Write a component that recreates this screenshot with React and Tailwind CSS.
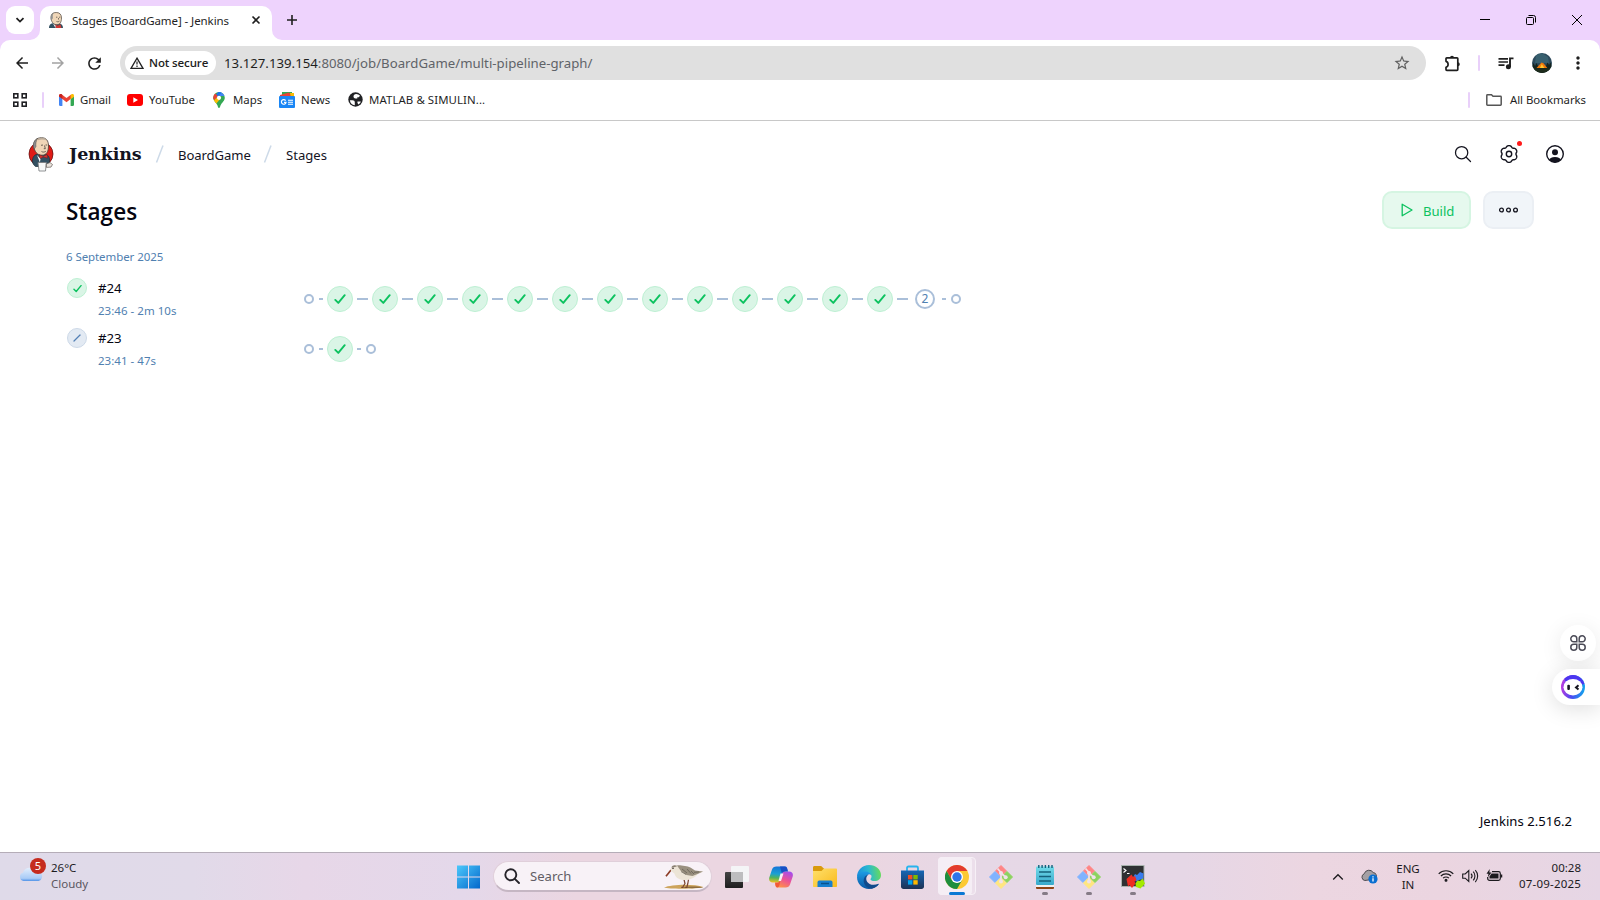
import React from "react";
import {
  MdArrowBack, MdArrowForward, MdRefresh, MdStarBorder, MdMoreVert,
} from "react-icons/md";
import { IoSearchOutline } from "react-icons/io5";

/* ---------- browser icons ---------- */

function JenkinsHead() {
  return (
    <svg width="16" height="16" viewBox="0 0 16 16">
      <path d="M1 16C1 12.6 3 11.2 6 11l5 .3c2.4.4 3.9 1.800 4 4.700z" fill="#335061" />
      <path d="M3 5C3 1.700 5.200.5 8.200.5c3.400 0 5.300 2 5.300 5.500 0 4-1.500 6.700-4.600 6.700C5.500 12.700 3 10 3 5z" fill="#f0d6b7" stroke="#49413a" strokeWidth=".7" />
      <path d="M3 8.500c-.8-3 0-6.400 2.500-7.500-1 2-.8 3.700-.6 5.200z" fill="#8f9090" />
      <path d="M8 5.200h1.400M11 5.200h1.300M8.500 9.500c1.200.5 2.200.2 3-.4M10.500 6v1.600" stroke="#49413a" strokeWidth=".7" fill="none" />
      <path d="M7.200 12.500l2.600 1.200L12.400 12.300l1 3.700H7.600z" fill="#d33833" />
      <path d="M5 11.500l2.500 2v2.500z" fill="#fff" />
    </svg>
  );
}

function JenkinsLogo() {
  return (
    <svg width="26" height="35" viewBox="0 0 26 35">
      <circle cx="13" cy="17" r="12" fill="#e01b16" stroke="#611" strokeWidth=".8" />
      <path d="M4.500 23C5 19 7 17.500 10 17l8 .6c2.600.8 3.700 3 3.700 6.400l-2 5.500H7.500C5.500 28 4.200 26 4.500 23z" fill="#335061" stroke="#1d2f3a" strokeWidth=".7" />
      <path d="M5.800 9C5.300 3.500 8.700.7 13.500.7c4.800 0 7 3 7 8.300 0 5.500-2 9.200-6.500 9.200C9.200 18.200 6.300 14.500 5.800 9z" fill="#f0d6b7" stroke="#49413a" strokeWidth=".8" />
      <path d="M6 12.500C4.500 8 5.500 3.300 9.600 1.500 8 4 7.700 6.500 8 9.500z" fill="#8b8d8f" stroke="#49413a" strokeWidth=".4" />
      <path d="M10 1.700C13 .2 17.500.5 19 3.500 16.500 2.500 13 2 10 3.200z" fill="#b9ab9a" />
      <path d="M13 8.300l2-.3M17.500 8h1.700M16.500 8.500l.8 3.200h-1.500M13.500 14.500c1.500.9 3 .7 4.300-.2" stroke="#49413a" strokeWidth=".8" fill="none" />
      <path d="M11.500 17.800l3.600 1.600 4-1.900.4 3.600-4-1.100-3.600 1.600z" fill="#d33833" stroke="#81100e" strokeWidth=".5" />
      <path d="M9 18l3.500 4-.6 3.500z" fill="#fff" />
      <path d="M10 25.500h8.300l-.8 8.500h-6.500z" fill="#f7f8f8" stroke="#77797b" strokeWidth=".8" />
      <path d="M18.300 27l3.700-1.500 2.500 2-1.500 2.600-4.600.3z" fill="#e8e2dc" stroke="#665f59" strokeWidth=".7" />
    </svg>
  );
}

function WarningIcon() {
  return (
    <svg width="14" height="12" viewBox="0 0 14 12" fill="none">
      <path d="M7 1.200 13 11.300H1z" stroke="#222" strokeWidth="1.300" />
      <path d="M7 4.600v3M7 8.500v1.400" stroke="#222" strokeWidth="1.200" />
    </svg>
  );
}

function ExtensionIcon() {
  return (
    <svg width="17" height="17" viewBox="0 0 17 17">
      <path d="M2 3.600a.8.800 0 0 1 .8-.8H13a.8.800 0 0 1 .8.800v11a.8.800 0 0 1-.8.800H2.800a.8.800 0 0 1-.8-.8v-2.300c1.300-.3 2.100-1.400 2.100-2.700S3.300 6.600 2 6.300z" fill="none" stroke="#1f1f1f" strokeWidth="1.700" strokeLinejoin="round" />
      <path d="M6 2.800a2 2 0 0 1 4 0zM13.800 7.200a2 2 0 0 1 0 4z" fill="#1f1f1f" />
    </svg>
  );
}

function QueueIcon() {
  return (
    <svg width="16" height="13" viewBox="0 0 16 13" fill="none" stroke="#1f1f1f" strokeWidth="1.700">
      <path d="M.5 1.800h9.500M.5 5h9.500M.5 8.200h6" />
      <path d="M12 10V1.400h3.500" strokeWidth="1.900" />
      <circle cx="10.400" cy="9.800" r="2.500" fill="#1f1f1f" stroke="none" />
    </svg>
  );
}

function AppsGrid() {
  return (
    <svg width="14" height="14" viewBox="0 0 14 14" fill="none" stroke="#202124" strokeWidth="1.600">
      <rect x=".8" y=".8" width="4" height="4" />
      <rect x="9.200" y=".8" width="4" height="4" />
      <rect x=".8" y="9.200" width="4" height="4" />
      <rect x="9.200" y="9.200" width="4" height="4" />
    </svg>
  );
}

function GmailIcon() {
  return (
    <svg width="15" height="12" viewBox="0 0 15 12">
      <path d="M0 2v8.800c0 .6.400 1.200 1 1.200h2.400V4.500z" fill="#4285f4" />
      <path d="M15 2v8.800c0 .6-.4 1.200-1 1.200h-2.400V4.500z" fill="#34a853" />
      <path d="M0 1.800C0 .2 1.500-.5 2.800.4l4.700 3.700L12.200.4v4.100L7.500 8.200 2.800 4.500 0 2.600z" fill="#ea4335" />
      <path d="M11.600 1 12.600.2C13.800-.5 15 .3 15 1.800v1l-3.400 2.500z" fill="#fbbc04" />
      <path d="M0 1.600C.2.300 1.600-.3 2.700.3l.7.600v4L0 2.600z" fill="#c5221f" />
    </svg>
  );
}

function MapsPin() {
  return (
    <svg width="12" height="16" viewBox="0 0 12 16">
      <defs><clipPath id="pin"><path d="M6 0a5.800 5.800 0 0 1 5.800 5.800c0 3.200-2.800 4.600-4.200 7.500C7.100 14.500 7 16 6 16s-1.100-1.500-1.600-2.700C3 10.400.2 9 .2 5.800A5.800 5.800 0 0 1 6 0z" /></clipPath></defs>
      <g clipPath="url(#pin)">
        <rect width="12" height="16" fill="#34a853" />
        <path d="M4-1h8v5L7 4z" fill="#4285f4" />
        <path d="M3.500 5 0 9.500l2.500 3L8 6z" fill="#fbbc04" />
        <path d="M6-1 2 4l2 2 5-6z" fill="#1a73e8" />
        <path d="M0 2.500 1.800 1l3 3L1.500 8-1 6z" fill="#ea4335" />
      </g>
      <circle cx="6" cy="5.800" r="2.100" fill="#fff" />
    </svg>
  );
}

function NewsIcon() {
  return (
    <svg width="16" height="16" viewBox="0 0 16 16">
      <path d="M3 0h10v5H3z" fill="#34a853" />
      <path d="M1 3l9-2.500 3 3.500v2H1z" fill="#ea4335" />
      <path d="M11 1h4v5h-3z" fill="#fbbc04" />
      <rect y="4" width="16" height="12" rx="1" fill="#1a86f5" />
      <path d="M6.600 8.600A2.300 2.300 0 1 0 7 10.300H5" stroke="#fff" strokeWidth="1.200" fill="none" />
      <path d="M9 8.200h5M9 10.200h5M9 12.200h5" stroke="#fff" strokeWidth="1.100" />
    </svg>
  );
}

function GlobeIcon() {
  return (
    <svg width="15" height="15" viewBox="0 0 15 15">
      <circle cx="7.500" cy="7.500" r="7.200" fill="#202124" />
      <path d="M1.900 8.200h2.600c1.500 0 2.300.9 2.300 2.300v2.700C4.100 12.900 2.100 10.900 1.900 8.200zM5.500 4.500C5.500 3 6.500 2 8.200 1.900c1.500.1 2.800.7 3.800 1.800L10.800 5.200H9.300v1.300H7.500C6.300 6.500 5.500 5.700 5.500 4.500zM9.500 9.500h3.300c-.4 1.300-1.200 2.300-2.300 2.900-.8-.7-1.300-1.800-1-2.900z" fill="#fff" />
    </svg>
  );
}

function Avatar() {
  return (
    <svg width="20" height="20" viewBox="0 0 20 20">
      <defs><clipPath id="av"><circle cx="10" cy="10" r="10" /></clipPath></defs>
      <g clipPath="url(#av)">
        <rect width="20" height="20" fill="#2d4a5c" />
        <path d="M4 2 10 0l6 4 1 6H3z" fill="#38606f" />
        <path d="M0 13l1.500-3L3 13l1.500-3L6 13h8l1.500-3.500L17 12l1.500-2.500L20 13v7H0z" fill="#14241f" />
        <path d="M4.500 15 9.500 9.500l2 .7 3.800 4.800z" fill="#ef780c" />
        <path d="M8 15l1.800-4L12.300 15z" fill="#ffc62e" />
        <path d="M0 15.200h20V20H0z" fill="#1d2b1b" />
      </g>
    </svg>
  );
}

/* ---------- Jenkins icons ---------- */

const gearPath = (() => {
  const pts = [];
  for (let i = 0; i < 120; i++) {
    const t = (i / 120) * Math.PI * 2;
    const r = 7.8 + 0.75 * Math.cos(6 * t) - 0.15 * Math.cos(12 * t);
    pts.push((10 + r * Math.sin(t)).toFixed(2) + " " + (10 - r * Math.cos(t)).toFixed(2));
  }
  return "M" + pts.join("L") + "Z";
})();

function GearIcon() {
  return (
    <svg width="20" height="20" viewBox="0 0 20 20" fill="none" stroke="#14141f" strokeWidth="1.400">
      <path d={gearPath} strokeLinejoin="round" />
      <circle cx="10" cy="10" r="2.700" />
    </svg>
  );
}

function UserIcon() {
  return (
    <svg width="20" height="20" viewBox="0 0 20 20">
      <defs><clipPath id="user"><circle cx="10" cy="10" r="8.500" /></clipPath></defs>
      <circle cx="10" cy="10" r="8.300" fill="none" stroke="#14141f" strokeWidth="1.400" />
      <circle cx="10" cy="8.200" r="3" fill="#14141f" />
      <ellipse cx="10" cy="16.500" rx="6" ry="3.500" fill="#14141f" clipPath="url(#user)" />
    </svg>
  );
}

function Check({ size }) {
  return (
    <svg width={size} height={size} viewBox="0 0 12 12" fill="none">
      <path d="M1.300 6.900 4.300 9.900 10.700 2.200" stroke="#0cc25f" strokeWidth="1.900" strokeLinecap="round" strokeLinejoin="round" />
    </svg>
  );
}

function Terminal() {
  return <div className="size-[10px] shrink-0 rounded-full border-2 border-[#aabfd9]" />;
}
function ShortDash() {
  return <div className="ml-[5px] mr-1 h-[2px] w-1 shrink-0 bg-[#aabfd9]" />;
}
function LongDash() {
  return <div className="mx-1 h-[2px] w-[11px] shrink-0 bg-[#aabfd9]" />;
}
function StageDone() {
  return (
    <div className="flex size-[26px] shrink-0 items-center justify-center rounded-full border border-[#bdf0d3] bg-[#daf5e6]">
      <Check size={12} />
    </div>
  );
}

function Run({ ok, name, time, children }) {
  return (
    <div className="flex h-[50px] items-center">
      <div className="flex w-[237px] self-start pt-1">
        <div className={ok ? "flex size-5 items-center justify-center rounded-full border border-[#bdf0d3] bg-[#daf5e6]" : "flex size-5 items-center justify-center rounded-full border border-[#cdd9e8] bg-[#e3eaf3]"}>
          {ok ? <Check size={9} /> : (
            <svg width="8" height="8" viewBox="0 0 8 8"><path d="M1 7 7 1" stroke="#5380b5" strokeWidth="1.300" strokeLinecap="round" /></svg>
          )}
        </div>
        <div className="ml-[11px]">
          <div className="h-5 text-[13.200px] leading-5 text-[#050510]">{name}</div>
          <div className="mt-[3px] h-5 text-[11.500px] leading-5 tracking-[0.030px] text-[#5080b0]">{time}</div>
        </div>
      </div>
      <div className="flex items-center">{children}</div>
    </div>
  );
}

/* ---------- taskbar icons ---------- */

function WindowsLogo() {
  return (
    <svg width="24" height="24" viewBox="0 0 24 24">
      <defs><linearGradient id="win" x1="0" y1="0" x2="1" y2="1"><stop offset="0" stopColor="#4cc8fb" /><stop offset="1" stopColor="#0467cb" /></linearGradient></defs>
      <path d="M.5.500h11v11H.5zM12.500.500h11v11h-11zM.5 12.500h11v11H.5zM12.500 12.500h11v11h-11z" fill="url(#win)" />
    </svg>
  );
}

function Sandpiper() {
  return (
    <svg width="42" height="26" viewBox="0 0 42 26">
      <path d="M1 23.500C8 20.500 30 19.500 40.500 23c-4 2-34 2.300-39.500.5z" fill="#cda45c" />
      <path d="M18 23.300c7-1 17-1.400 22 0-5 1.200-17 1.200-22 0z" fill="#8c6c3f" />
      <path d="M21 15.500l1 4-2.300 3.800M25.500 15.500l-.7 4-1 3.800M20.300 23.300h-2M24.300 23.300h-2" stroke="#7b4331" strokeWidth="1.200" fill="none" />
      <path d="M8 6 3 12.200" stroke="#8c3b25" strokeWidth="1.700" />
      <path d="M7.500 5.500C8 2.300 10.500 1 13 1.500c3 0 3.500 1.400 6 1.300 5 0 9 2 12.500 4.200l9 .5-5.500 2.500c-3 3.500-7.500 6-13 6-5 0-9.500-2-10.500-6.300C11 8.500 8 8 7.500 5.500z" fill="#ece4d6" />
      <path d="M14 1.500c2.500-.5 5 .5 8 .5 4 0 7 2.500 10 4.500l8 1-5.500 2.500-5 2-6-1-6-4.500z" fill="#99907f" />
      <path d="M19 5l5 4M24 5l4 4.500M28 7l3 3M31 8.300l5-.3M18 7.500l5 3" stroke="#5f594f" strokeWidth=".7" />
      <path d="M8.300 3.500C9.500.8 12 .6 14.500 2l-2.500 1z" fill="#8a8173" />
      <circle cx="10" cy="4.300" r=".8" fill="#2d2420" />
    </svg>
  );
}

function TaskView() {
  return (
    <svg width="24" height="24" viewBox="0 0 24 24">
      <defs><linearGradient id="tvd" x1="0" y1="0" x2="0" y2="1"><stop offset="0" stopColor="#444" /><stop offset="1" stopColor="#1e1e1e" /></linearGradient></defs>
      <rect y="7" width="18" height="16" rx="1" fill="url(#tvd)" />
      <rect x="6" y="1" width="18" height="16" rx="1" fill="#f4f4f6" />
      <rect x="6" y="7" width="12" height="10" fill="#bdbdbf" />
    </svg>
  );
}

function Copilot() {
  return (
    <svg width="24" height="24" viewBox="0 0 24 24">
      <defs>
        <linearGradient id="cpa" x1=".3" y1="0" x2=".2" y2="1"><stop offset="0" stopColor="#1676d8" /><stop offset=".45" stopColor="#1aa0d4" /><stop offset=".7" stopColor="#52b35c" /><stop offset="1" stopColor="#f4c21c" /></linearGradient>
        <linearGradient id="cpb" x1=".8" y1="0" x2=".3" y2="1"><stop offset="0" stopColor="#a24cf0" /><stop offset=".5" stopColor="#ec5395" /><stop offset="1" stopColor="#ff9246" /></linearGradient>
      </defs>
      <path d="M7.500 1.500h8c2 0 2.400 1.500 3 4l-4.500 1.500-2.500 8c-.7 2-1.500 2.500-3.500 2.500H4c-3 0-4.500-2-3.700-5L3 4.500c.7-2 2-3 4.500-3z" fill="url(#cpa)" />
      <path d="M16.500 22.500h-8c-2 0-2-1.500-2.600-4l4-1 3-8.500c.7-2 1.500-2.500 3.500-2.500H20c3 0 4.500 2 3.700 5L21 19.500c-.7 2-2 3-4.500 3z" fill="url(#cpb)" />
      <path d="M11 1.500h5c2 0 2.300 1.500 3 5h-3c-2 0-2.500.7-3 2.500z" fill="#174fc5" />
      <path d="M6 17.500h2c1.800 0 2.500-.5 3.200-2.500l1-3.500L10.500 20c-.5 1.500-1 2.500-2.500 2.500-1.500-.5-1.500-3-2-5z" fill="#f15a35" />
      <path d="M11.500 8.500h3l-2.500 7.500H9.500z" fill="#f7eef5" />
    </svg>
  );
}

function Explorer() {
  return (
    <svg width="24" height="24" viewBox="0 0 24 24">
      <defs><linearGradient id="fold" x1="0" y1="0" x2="1" y2="1"><stop offset="0" stopColor="#ffe06b" /><stop offset="1" stopColor="#f9ba1d" /></linearGradient></defs>
      <path d="M0 2.500c0-.8.500-1.500 1.500-1.500H8c1 0 2 2.500 3 2.500v5H0z" fill="#d99a0c" />
      <path d="M0 6h8.500L11 3.500h12c.6 0 1 .4 1 1V21c0 .6-.4 1-1 1H1c-.6 0-1-.4-1-1z" fill="url(#fold)" />
      <path d="M4.500 17.500c0-1.300.7-2 1.700-2h11.600c1 0 1.700.7 1.700 2V22H4.500z" fill="#1780d0" />
      <path d="M8 18.500h8" stroke="#0a528c" strokeWidth="1.500" />
    </svg>
  );
}

function Edge() {
  return (
    <svg width="24" height="24" viewBox="0 0 24 24">
      <defs>
        <linearGradient id="ea" x1="0" y1=".5" x2="1" y2=".4"><stop offset="0" stopColor="#1a8ee0" /><stop offset=".5" stopColor="#2bb9cf" /><stop offset="1" stopColor="#69dc58" /></linearGradient>
        <linearGradient id="eb" x1="0" y1="0" x2="0" y2="1"><stop offset="0" stopColor="#1c9ce4" /><stop offset="1" stopColor="#0b57a4" /></linearGradient>
      </defs>
      <path d="M0 12C0 5 5.300 0 12 0c7 0 12 4.700 12 10 0 4-3 6-6.300 6-2.700 0-4.200-.9-4.200-1.800 0-.6 1-1 1-2.700C14.500 9 12 7.500 9 7.500 4 7.500 1 10.500 0 12z" fill="url(#ea)" />
      <path d="M0 12c1-3.500 4-5.500 8-5.500 3.500 0 6.500 2 6.500 5 0-1.500-1.500-2.500-3-2-3 1-3.500 5-1.500 8 2 2.800 6.500 4 12 1.300C20 22 16.500 24 12 24 5.300 24 0 18.700 0 12z" fill="url(#eb)" />
      <path d="M11.500 9.500c-4 1-5.500 4.500-4.500 8.500 1 3.500 4 5.500 7.500 5.700 3.500-.7 6-2.500 7.500-4.900-5.500 2-9.500 1-11.500-1.500-2-2.600-1.500-6.300 1-7.800z" fill="#114a8b" />
    </svg>
  );
}

function Store() {
  return (
    <svg width="24" height="24" viewBox="0 0 24 24">
      <defs><linearGradient id="st" x1="0" y1="0" x2="0" y2="1"><stop offset="0" stopColor="#1567b5" /><stop offset="1" stopColor="#1d3254" /></linearGradient></defs>
      <path d="M6 6V3c0-1 .6-1.500 1.500-1.500h8c.9 0 1.500.5 1.500 1.500v3" fill="none" stroke="#28b4ee" strokeWidth="1.800" />
      <path d="M0 5.500h23v16c0 1.500-1 2.500-2.500 2.500h-18C1 24 0 23 0 21.500z" fill="url(#st)" />
      <path d="M7 10h4.400v4.400H7z" fill="#f25022" /><path d="M12.300 10h4.400v4.400h-4.400z" fill="#7fba00" />
      <path d="M7 15.200h4.400v4.400H7z" fill="#00a4ef" /><path d="M12.300 15.200h4.400v4.400h-4.400z" fill="#ffb900" />
    </svg>
  );
}

function Chrome() {
  return (
    <svg width="24" height="24" viewBox="0 0 24 24">
      <circle cx="12" cy="12" r="12" fill="#fcc934" />
      <path d="M1.600 6A12 12 0 0 1 22.400 6H12l-5.200 9z" fill="#e33b2e" />
      <path d="M1.600 6A12 12 0 0 0 12 24l5.200-9-5.200 3-5.200-3z" fill="#1e8e3e" />
      <circle cx="12" cy="12" r="6" fill="#fff" />
      <circle cx="12" cy="12" r="4.700" fill="#2f75e8" />
    </svg>
  );
}

function GitBash() {
  return (
    <svg width="24" height="24" viewBox="0 0 24 24">
      <path d="M12 .5 17.500 6 12 11.500 6.500 6z" fill="#ff8585" stroke="#ff8585" strokeLinejoin="round" />
      <path d="M6 6.500 11.500 12 6 17.500.5 12z" fill="#80b3ff" stroke="#80b3ff" strokeLinejoin="round" />
      <path d="M12 12.500 17.500 18 12 23.500 6.500 18z" fill="#ffe680" stroke="#ffe680" strokeLinejoin="round" />
      <path d="M18 6.500 23.500 12 18 17.500 12.500 12z" fill="#8cd35f" stroke="#8cd35f" strokeLinejoin="round" />
      <path d="M8.500 3.500 12 7.500v9M12 8l5 4.500" stroke="#f0e2ea" strokeWidth="1.700" fill="none" />
      <circle cx="12" cy="8" r="2" fill="#f0e2ea" /><circle cx="12" cy="16.500" r="2" fill="#f0e2ea" /><circle cx="16.700" cy="12.300" r="2" fill="#f0e2ea" />
    </svg>
  );
}

function Notepad() {
  return (
    <svg width="24" height="24" viewBox="0 0 24 24">
      <defs><linearGradient id="np" x1="0" y1="0" x2="0" y2="1"><stop offset="0" stopColor="#73dcea" /><stop offset="1" stopColor="#37a8cb" /></linearGradient></defs>
      <rect x="3" y="20.500" width="18" height="3.500" rx="1" fill="#8f4416" />
      <rect x="3" y="19" width="18" height="3" fill="#f1f1f1" />
      <rect x="3" y="1.500" width="18" height="18.500" rx="1" fill="url(#np)" />
      <path d="M5.800 0v3M9.100 0v3M12.400 0v3M15.700 0v3M19 0v3" stroke="#15617b" strokeWidth="1.400" />
      <path d="M6 7h12M6 11.500h12M6 16h12" stroke="#15617b" strokeWidth="1.500" />
    </svg>
  );
}

function MobaXterm() {
  return (
    <svg width="24" height="24" viewBox="0 0 24 24">
      <rect x=".5" y=".5" width="22.500" height="21" fill="#2f3133" stroke="#a9b3ae" />
      <path d="M2.500 3.500 5 5.500l-2.500 2M6 8.500h2.500" stroke="#fff" strokeWidth="1.100" fill="none" />
      <path d="M12.500 11.500 14 9l2 1 3-3 3.500 1.500-.5 5.500-4 1-3 1.500z" fill="#3a7cec" />
      <path d="M5.500 14 10.500 9.500 12 12l2-1 1.500 4 -2 1.500 1 2-3.500 4.500-2.500-3-1.500 1.500z" fill="#ee2d22" />
      <path d="M14.500 18.500l2-3 2.500.5 2.500-2.500L24 18.500 19.500 23.500l-4.500-1.500z" fill="#a4ea00" />
    </svg>
  );
}

const dock = [
  { id: "view", icon: <TaskView /> },
  { id: "copilot", icon: <Copilot /> },
  { id: "files", icon: <Explorer /> },
  { id: "edge", icon: <Edge /> },
  { id: "store", icon: <Store /> },
  { id: "chrome", icon: <Chrome />, active: true },
  { id: "git1", icon: <GitBash /> },
  { id: "notepad", icon: <Notepad />, running: true },
  { id: "git2", icon: <GitBash />, running: true },
  { id: "moba", icon: <MobaXterm />, running: true },
];

function DockItem({ item }) {
  return (
    <div className="relative flex h-full w-11 items-center justify-center">
      {item.active && <div className="absolute left-[3px] top-1 h-[38px] w-[38px] rounded-[4px] border border-[#f6f0f6] bg-[#ecdfeb]" />}
      {item.active && <div className="absolute left-[3px] top-1 h-[38px] w-[34px] rounded-[4px] bg-[#f5eef5]" />}
      <div className="relative">{item.icon}</div>
      {item.active && <div className="absolute bottom-[5px] left-[14px] h-[3px] w-4 rounded-full bg-[#0a78d4]" />}
      {item.running && <div className="absolute bottom-[5px] left-[19px] h-[3px] w-1.5 rounded-full bg-[#857b86]" />}
    </div>
  );
}

/* ---------- sections ---------- */

function TabStrip() {
  return (
    <div className="flex h-10 items-end bg-[#eed3fd] text-[#1f1f1f]">
      <div className="flex h-10 w-10 items-center justify-center">
        <div className="flex size-7 items-center justify-center rounded-[9px] bg-white">
          <svg width="10" height="10" viewBox="0 0 10 10" fill="none"><path d="M1.500 3.200 5 6.600 8.500 3.200" stroke="#1f1f1f" strokeWidth="1.800" /></svg>
        </div>
      </div>
      <div className="relative flex h-[34px] w-[232px] items-center rounded-t-[10px] bg-white pl-2">
        <svg className="absolute -left-[10px] bottom-0" width="10" height="10" viewBox="0 0 10 10"><path d="M10 0v10H0A10 10 0 0 0 10 0z" fill="#fff" /></svg>
        <svg className="absolute -right-[10px] bottom-0" width="10" height="10" viewBox="0 0 10 10"><path d="M0 0v10h10A10 10 0 0 1 0 0z" fill="#fff" /></svg>
        <div className="-mt-1.5"><JenkinsHead /></div>
        <div className="-mt-[5px] ml-2 w-[172px] whitespace-nowrap text-[11.500px] tracking-[-0.080px]">Stages [BoardGame] - Jenkins</div>
        <svg className="-mt-1.5" width="20" height="10" viewBox="0 0 20 10"><path d="M8.500 1.500l7 7M15.500 1.500l-7 7" stroke="#1f1f1f" strokeWidth="1.600" /></svg>
      </div>
      <svg className="mb-[15px] ml-[15px]" width="10" height="10" viewBox="0 0 10 10"><path d="M5 0v10M0 5h10" stroke="#1f1f1f" strokeWidth="1.600" /></svg>
      <div className="ml-auto flex h-10 items-center text-black">
        <svg width="10" height="10" viewBox="0 0 10 10"><path d="M0 4.500h10" stroke="#000" /></svg>
        <svg className="ml-[36px]" width="10" height="10" viewBox="0 0 10 10" fill="none" stroke="#000"><rect x=".5" y="2.500" width="7" height="7" rx="1" /><path d="M2.500.500h5a2 2 0 0 1 2 2v5" /></svg>
        <svg className="ml-[36px] mr-[18px]" width="10" height="10" viewBox="0 0 10 10"><path d="M0 0l10 10M10 0 0 10" stroke="#000" /></svg>
      </div>
    </div>
  );
}

function Toolbar() {
  return (
    <div className="bg-[#eed3fd]">
      <div className="flex h-[46px] items-center rounded-t-[10px] bg-white">
        <MdArrowBack className="ml-[13px] text-[#1f1f1f]" size={18} />
        <MdArrowForward className="ml-[18px] text-[#a3a3a3]" size={18} />
        <MdRefresh className="ml-[18px] text-[#1f1f1f]" size={19} />
        <div className="ml-4 flex h-[34px] w-[1306px] items-center rounded-full bg-[#e0e0e0] pl-[5px]">
          <div className="flex h-6 w-[91px] items-center rounded-full bg-white pl-[5px]">
            <WarningIcon />
            <span className="ml-[5px] whitespace-nowrap font-[Open_Sans] text-[11.500px] font-semibold tracking-[-0.120px] text-[#1f1f1f]">Not secure</span>
          </div>
          <div className="ml-2 mt-px whitespace-nowrap text-[13.200px] tracking-[0.020px] text-[#5f6368]"><span className="text-[#1f1f1f]">13.127.139.154</span>:8080/job/BoardGame/multi-pipeline-graph/</div>
          <MdStarBorder className="ml-auto mr-[15px] text-[#606060]" size={18} />
        </div>
        <div className="ml-[18px]"><ExtensionIcon /></div>
        <div className="ml-[17px] h-4 w-[2px] rounded bg-[#e9d0fa]" />
        <div className="ml-[18px]"><QueueIcon /></div>
        <div className="ml-[18px]"><Avatar /></div>
        <MdMoreVert className="ml-[16px] text-[#1f1f1f]" size={20} />
      </div>
    </div>
  );
}

function Bookmarks() {
  return (
    <div className="flex h-[35px] items-center whitespace-nowrap border-b border-[#c8c8c8] bg-white pb-[6px] pl-[13px] text-[11.400px] text-[#1f1f1f]">
      <AppsGrid />
      <div className="ml-[15px] h-4 w-[2px] rounded bg-[#e9d0fa]" />
      <div className="ml-[15px] flex w-[68px] items-center gap-[6px]"><GmailIcon /><span className="tracking-[-0.080px]">Gmail</span></div>
      <div className="flex w-[86px] items-center gap-[6px]">
        <svg width="16" height="12" viewBox="0 0 16 12"><rect width="16" height="12" rx="3" fill="#f00" /><path d="M6.300 3.300v5.400L11 6z" fill="#fff" /></svg>
        <span>YouTube</span>
      </div>
      <div className="flex w-[66px] items-center gap-[8px]"><MapsPin /><span>Maps</span></div>
      <div className="flex w-[69px] items-center gap-[6px]"><NewsIcon /><span>News</span></div>
      <div className="flex items-center gap-[6px]"><GlobeIcon /><span className="tracking-[0.090px]">MATLAB &amp; SIMULIN...</span></div>
      <div className="ml-auto h-4 w-[2px] rounded bg-[#e9d0fa]" />
      <svg className="ml-4" width="16" height="12" viewBox="0 0 16 12" fill="none"><path d="M.8 1.500c0-.4.300-.7.700-.7h4l1.500 1.500h7.500c.4 0 .7.300.7.700v7.500c0 .4-.3.700-.7.700h-13c-.4 0-.7-.3-.7-.7z" stroke="#555" strokeWidth="1.500" /></svg>
      <span className="ml-2 mr-[14px] w-[76px] tracking-[-0.050px]">All Bookmarks</span>
    </div>
  );
}

function Slash() {
  return <svg width="9" height="20" viewBox="0 0 9 20"><path d="M1.500 18.500 8 1.500" stroke="#cddae8" strokeWidth="1.500" /></svg>;
}

function Page() {
  return (
    <main className="relative flex h-[731px] flex-col bg-white text-[#14141f]">
      <header className="flex h-[66px] items-center whitespace-nowrap pl-[28px] text-[13.100px]">
        <JenkinsLogo />
        <span className="ml-[15px] mt-px w-[86px] font-[DejaVu_Serif] text-[17.500px] font-bold tracking-[-0.150px]">Jenkins</span>
        <Slash />
        <span className="ml-[14px] mt-[3px] w-[85px] tracking-[-0.080px]">BoardGame</span>
        <Slash />
        <span className="ml-[14px] mt-[3px]">Stages</span>
        <IoSearchOutline className="ml-auto" size={20} />
        <div className="relative ml-[26px]"><GearIcon /><span className="absolute -right-[3px] -top-[3px] size-[5px] rounded-full bg-[#ff1a1a]" /></div>
        <div className="ml-[26px] mr-[35px]"><UserIcon /></div>
      </header>
      <div className="ml-[66px] mr-[66px] mt-1 flex h-[38px] items-center">
        <h1 className="mt-1 font-[Open_Sans] text-[22.500px] font-semibold leading-[30px] tracking-[0.100px] text-[#050510]">Stages</h1>
        <div className="ml-auto flex h-[38px] w-[89px] items-center rounded-[10px] border-2 border-[#d5f5e2] bg-[#e6f9ee] pl-[17px] text-[13.100px] text-[#0cc25f]">
          <svg width="12" height="14" viewBox="0 0 12 14"><path d="M1.200 1.200v11.600L11 7z" fill="none" stroke="#0cc25f" strokeWidth="1.300" strokeLinejoin="round" /></svg>
          <span className="ml-[10px] mt-[3px]">Build</span>
        </div>
        <div className="ml-3 flex h-[38px] w-[51px] items-center justify-center rounded-[10px] border-2 border-[#ebeff4] bg-[#f1f5f9]">
          <svg width="21" height="6" viewBox="0 0 21 6" fill="none" stroke="#14141f" strokeWidth="1.300"><circle cx="3.500" cy="3" r="1.900" /><circle cx="10.500" cy="3" r="1.900" /><circle cx="17.500" cy="3" r="1.900" /></svg>
        </div>
      </div>
      <div className="ml-[66px] mt-[18px] h-5 text-[11.500px] leading-5 tracking-[-0.080px] text-[#5080b0]">6 September 2025</div>
      <div className="ml-[67px] mt-[7px]">
        <Run ok name="#24" time="23:46 - 2m 10s">
          <Terminal /><ShortDash />
          {Array.from({ length: 13 }, (_, i) => (
            <React.Fragment key={i}><StageDone /><LongDash /></React.Fragment>
          ))}
          <div className="ml-[3px] mr-[2px] flex size-5 items-center justify-center rounded-full border-2 border-[#aabfd9] text-[12px] leading-4 text-[#5080b0]">2</div>
          <ShortDash /><div className="ml-px"><Terminal /></div>
        </Run>
        <Run name="#23" time="23:41 - 47s">
          <Terminal /><ShortDash /><StageDone /><div className="ml-[-1px]" /><ShortDash /><div className="ml-px"><Terminal /></div>
        </Run>
      </div>
      <footer className="mb-[21px] ml-auto mr-[28px] mt-auto h-5 text-[13.100px] leading-5 tracking-[0.040px] text-[#050510]">Jenkins 2.516.2</footer>

      <div className="absolute right-1 top-[504px] flex size-9 items-center justify-center rounded-full bg-white shadow-[0_4px_22px_rgba(0,0,0,0.09)]">
        <svg width="16" height="16" viewBox="0 0 16 16" fill="none" stroke="#4b4b57" strokeWidth="1.500">
          <path d="M6.800 6.800H3.800a3 3 0 1 1 3-3zM9.200 6.800h3a3 3 0 1 0-3-3zM6.800 9.200H3.800a3 3 0 1 0 3 3zM9.200 9.200h3a3 3 0 1 1-3 3z" />
        </svg>
      </div>
      <div className="absolute right-0 top-[548px] flex h-9 w-12 items-center rounded-l-full bg-white pl-[9px] shadow-[0_4px_22px_rgba(0,0,0,0.13)]">
        <svg width="24" height="24" viewBox="0 0 24 24">
          <defs><linearGradient id="bot" x1="0" y1=".6" x2="1" y2=".7"><stop offset="0" stopColor="#b83cdf" /><stop offset=".45" stopColor="#4b49f2" /><stop offset="1" stopColor="#10a9ec" /></linearGradient></defs>
          <circle cx="12" cy="12" r="12" fill="url(#bot)" />
          <path d="M3.500 3.500A12 12 0 0 1 23.500 9l-4 1-7-6-8 3z" fill="#4c36f0" />
          <ellipse cx="12" cy="12.200" rx="9.500" ry="8.300" fill="#fff" />
          <rect x="6.300" y="9.700" width="2.600" height="5.400" rx="1" fill="#151520" />
          <path d="M17.500 10.200 15 12.400l2.500 2.200" fill="none" stroke="#151520" strokeWidth="2" />
        </svg>
      </div>
    </main>
  );
}

function Taskbar() {
  return (
    <div className="flex h-12 items-center border-t border-[#b5adb8] bg-[linear-gradient(90deg,#dfdae9_0%,#e1dae9_12%,#e7d7e8_19%,#e4d8ea_29%,#ebd6e1_36%,#ebd6e1_54%,#e6d8e6_61%,#e6d7e6_74%,#ecd6e1_82%,#ebd5e0_90%,#e6d6e5_100%)] text-[#1c1a1e]">
      <div className="flex w-[456px] items-center pl-[18px]">
        <div className="relative -mt-1.5">
          <svg width="26" height="18" viewBox="0 0 26 18">
            <defs><linearGradient id="cl" x1="0" y1="0" x2="0" y2="1"><stop offset="0" stopColor="#e3eefc" /><stop offset=".8" stopColor="#a9cbf6" /><stop offset="1" stopColor="#4f92e8" /></linearGradient></defs>
            <path d="M5.500 16A4.200 4.200 0 0 1 5 7.800 7 7 0 0 1 18 6.500 4.900 4.900 0 0 1 20.500 16z" fill="url(#cl)" />
          </svg>
          <div className="absolute -top-[7px] left-3 flex size-4 items-center justify-center rounded-full bg-[#c52b1e] text-[11px] leading-4 text-white">5</div>
        </div>
        <div className="-mt-0.5 ml-[7px] whitespace-nowrap text-[11.500px] leading-4"><div>26°C</div><div className="text-[#5b565e]">Cloudy</div></div>
      </div>
      <div className="w-6 translate-x-[0.500px]"><WindowsLogo /></div>
      <div className="ml-[13px] flex h-[31px] w-[219px] items-center rounded-full border border-b-2 border-[#e0cfda] border-b-[#c5b6c3] bg-[#f8f2f7] pl-[10px]">
        <svg width="16" height="16" viewBox="0 0 16 16" fill="none" stroke="#26242a" strokeWidth="1.900"><circle cx="6.800" cy="6.800" r="5.500" /><path d="M10.800 10.800 15 15" strokeLinecap="round" /></svg>
        <span className="ml-[10px] mt-[2px] text-[13.100px] text-[#625d65]">Search</span>
        <div className="ml-auto mr-[6px] mt-px"><Sandpiper /></div>
      </div>
      <div className="ml-[3px] flex h-full">{dock.map((d) => <DockItem key={d.id} item={d} />)}</div>
      <div className="ml-auto flex items-center">
        <svg width="12" height="8" viewBox="0 0 12 8" fill="none"><path d="M1.200 6.500 6 1.700l4.800 4.800" stroke="#1c1a1e" strokeWidth="1.300" /></svg>
        <svg className="ml-[17px]" width="17" height="15" viewBox="0 0 17 15">
          <path d="M3.800 11.500A3.500 3.500 0 0 1 3.200 4.800 5 5 0 0 1 12.200 3.500 3.600 3.600 0 0 1 14 10z" fill="#a4a0a4" stroke="#4e4b50" strokeWidth="1" />
          <circle cx="12" cy="10" r="4.600" fill="#0a6fd1" /><path d="M12 9.200v3.300M12 7.200v1.300" stroke="#fff" strokeWidth="1.300" />
        </svg>
        <div className="ml-[17px] w-[26px] text-center text-[11.500px] leading-4"><div>ENG</div><div>IN</div></div>
        <svg className="-mt-0.5 ml-[17px]" width="16" height="13" viewBox="0 0 16 13" fill="none" stroke="#1c1a1e" strokeWidth="1.200">
          <path d="M.7 4.800a10.300 10.300 0 0 1 14.600 0M2.900 7a7.200 7.200 0 0 1 10.200 0M5.100 9.200a4.100 4.100 0 0 1 5.800 0" /><circle cx="8" cy="11.300" r=".9" fill="#1c1a1e" />
        </svg>
        <svg className="-mt-0.5 ml-2" width="17" height="14" viewBox="0 0 17 14" fill="none" stroke="#1c1a1e" strokeWidth="1.100">
          <path d="M.7 5v4.200h2.500l3.600 3.300V1.500L3.200 5zM9 4.700a3.300 3.300 0 0 1 0 4.600M11.200 2.700a6.200 6.200 0 0 1 0 8.600M13.300 1a8.800 8.800 0 0 1 0 12" />
        </svg>
        <svg className="-mt-[3px] ml-[7px]" width="17" height="13" viewBox="0 0 17 13" fill="none">
          <path d="M6 2.700h6.500c1 0 1.800.8 1.800 1.800v5c0 1-.8 1.800-1.800 1.800h-9c-1 0-1.800-.8-1.800-1.800V8" stroke="#1c1a1e" strokeWidth="1.200" />
          <path d="M5.500 4.500h7v5h-9V7.500z" fill="#1c1a1e" /><path d="M15.500 5.500v3" stroke="#1c1a1e" strokeWidth="1.500" />
          <path d="M3.700 0 .5 4.800h2L1.800 8.200 5.500 3.500H3.400z" fill="#1c1a1e" />
        </svg>
        <div className="-mt-0.5 ml-3 mr-[19px] w-[66px] whitespace-nowrap text-right text-[11.500px] leading-4"><div>00:28</div><div className="tracking-[0.200px]">07-09-2025</div></div>
      </div>
    </div>
  );
}

export default function App() {
  return (
    <div className="flex h-[900px] w-[1600px] flex-col overflow-hidden bg-white font-['Noto_Sans','Open_Sans',sans-serif]">
      <TabStrip />
      <Toolbar />
      <Bookmarks />
      <Page />
      <Taskbar />
    </div>
  );
}
